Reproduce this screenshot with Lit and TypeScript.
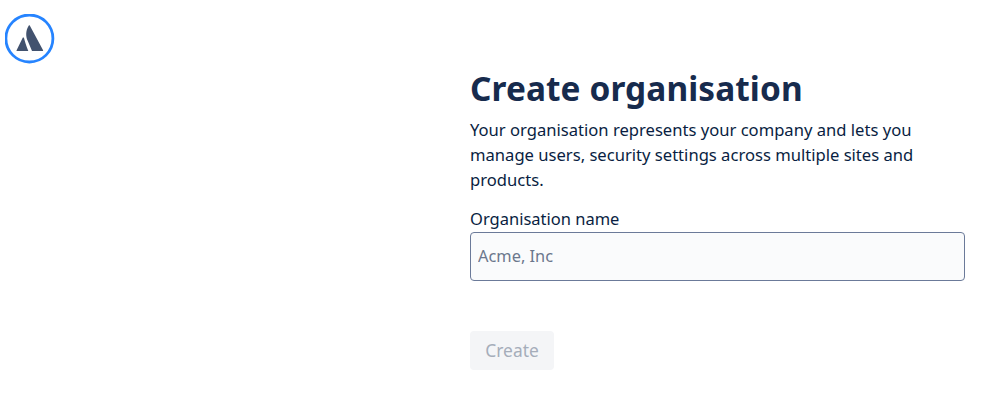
import { LitElement, html, css } from "lit";
import { customElement } from "lit/decorators.js";

@customElement("app-root")
export class AppRoot extends LitElement {
  static styles = css`
    :host { display: block; height: 420px; background: #fff; font-family: "Noto Sans", "Open Sans", sans-serif; color: #172b4d; overflow: hidden; }
    .page { display: flex; align-items: flex-start; }
    .logo { flex: none; width: 50px; height: 50px; margin: 14px 0 0 5px; display: block; }
    .main { flex: none; width: 495px; margin-left: 415px; padding-top: 66px; display: flex; flex-direction: column; align-items: flex-start; }
    h1 { margin: 0; font-size: 33.4px; line-height: 44px; font-weight: 700; color: #172b4d; letter-spacing: 0.1px; white-space: nowrap; }
    p { margin: 7px 0 0; font-size: 16.6px; line-height: 25px; color: #091e42; width: 470px; }
    label { margin-top: 15px; font-size: 16.5px; line-height: 24px; color: #091e42; }
    .input { box-sizing: border-box; width: 100%; height: 49px; margin-top: 1px; background: #fafbfc; border: 1.5px solid #6b7a99; border-radius: 4px; padding: 0 7px 2px; font: inherit; font-size: 16.4px; color: #172b4d; outline: none; }
    .input::placeholder { color: #6b778c; opacity: 1; }
    button { margin-top: 50px; width: 84px; height: 39px; background: #f4f5f7; color: #a5adba; border: none; border-radius: 4px; font: inherit; font-size: 17.4px; padding: 0 0 2px; }
  `;
  render() {
    return html`<div class="page">
      <svg class="logo" viewBox="5 14 50 50" aria-label="Atlassian">
        <circle cx="29.4" cy="38.5" r="23.5" fill="#fff" stroke="#2684ff" stroke-width="2.8"/>
        <path fill="#42526e" d="M28.7 25.7C25.800 30 25.400 36 27.800 41L32 51H42.600C43.100 51 43.300 50.600 43.100 50.200L29.900 25.700C29.600 25.100 29 25.100 28.700 25.700Z"/>
        <path fill="#42526e" d="M22.600 38C23 37.400 23.600 37.400 24 38C24.800 41 26 45.500 28.300 51H17C16.600 51 16.300 50.600 16.600 50.200Z"/>
      </svg>
      <div class="main">
        <h1>Create organisation</h1>
        <p>Your organisation represents your company and lets you manage users, security settings across multiple sites and products.</p>
        <label for="org">Organisation name</label>
        <input id="org" class="input" placeholder="Acme, Inc" />
        <button disabled>Create</button>
      </div>
    </div>`;
  }
}
